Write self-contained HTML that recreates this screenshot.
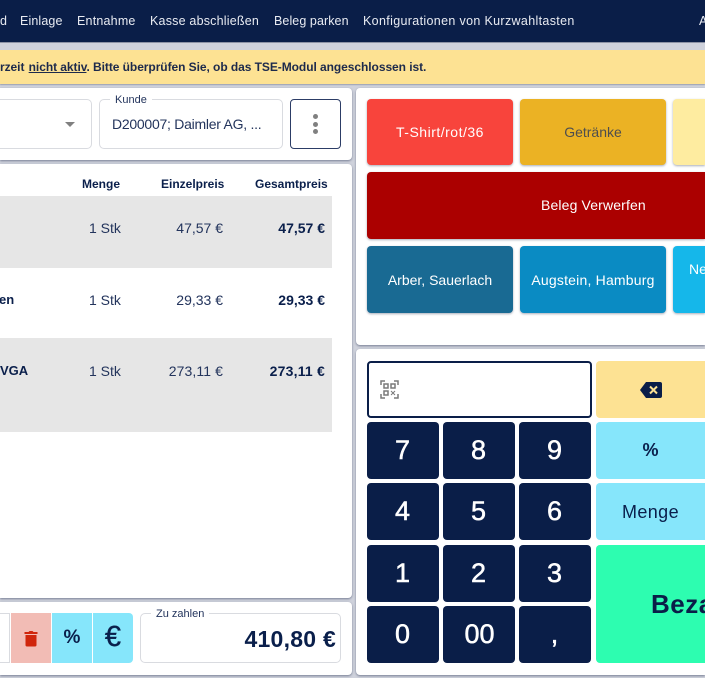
<!DOCTYPE html>
<html><head><meta charset="utf-8">
<style>
html,body{margin:0;padding:0;width:705px;height:678px;overflow:hidden;background:#cfd2dc;font-family:"Liberation Sans",sans-serif;color:#0a1f4b}
#root{position:absolute;left:0;top:0;width:705px;height:678px;overflow:hidden}
.a{position:absolute;white-space:nowrap}
.c{display:flex;align-items:center;justify-content:center;box-sizing:border-box}
.panel{position:absolute;background:#fff;box-shadow:0 1px 2px rgba(60,70,100,.6)}
.btn{position:absolute;border-radius:4px;display:flex;align-items:center;justify-content:center;font-size:14px;white-space:nowrap;box-shadow:0 1px 2px rgba(60,70,100,.45);color:#fff;overflow:hidden}
.key{position:absolute;width:72px;height:57px;background:#0a1e48;color:#fff;border-radius:4px;display:flex;align-items:center;justify-content:center;font-size:27px;-webkit-text-stroke:.5px #fff;padding-right:1px;box-sizing:border-box}
.nav{top:13px;color:#e8ebf2;font-size:12.5px;line-height:16px;letter-spacing:.25px}
.th{top:177px;font-size:12px;line-height:15px;font-weight:bold;text-align:right}
.td{font-size:14px;line-height:16px;color:#23345c}
.tb{font-size:14px;line-height:16px;font-weight:bold;color:#0a1f4b}
.fs{position:absolute;box-sizing:border-box;border:1px solid #d9dbe0;border-radius:5px;background:#fff}
.lg{position:absolute;background:#fff;padding:0 5px;font-size:11px;line-height:12px;color:#23345c;white-space:nowrap}
</style></head><body>
<div id="root">

<div class="a" style="left:0;top:0;width:705px;height:42px;background:#0a1e48"></div>
<div class="a" style="left:0;top:42px;width:705px;height:1px;background:#8d93a5"></div>
<div class="a nav" style="left:0">d</div>
<div class="a nav" style="left:20px;letter-spacing:.12px">Einlage</div>
<div class="a nav" style="left:77px;letter-spacing:.2px">Entnahme</div>
<div class="a nav" style="left:150px;letter-spacing:.2px">Kasse abschließen</div>
<div class="a nav" style="left:274px;letter-spacing:.08px">Beleg parken</div>
<div class="a nav" style="left:363px;letter-spacing:.34px">Konfigurationen von Kurzwahltasten</div>
<div class="a nav" style="left:699px;width:6px;overflow:hidden">A</div>

<div class="a" style="left:0;top:50px;width:705px;height:34px;background:#fde293;box-shadow:0 1px 1px rgba(60,70,100,.35)"></div>
<div class="a" style="left:0;top:60px;font-size:12px;line-height:15px;font-weight:bold;color:#1d2a4c;letter-spacing:-.06px">rzeit <span style="text-decoration:underline;margin-left:1px">nicht aktiv</span>. Bitte überprüfen Sie, ob das TSE-Modul angeschlossen ist.</div>

<!-- top left panel -->
<div class="panel" style="left:0;top:88px;width:352px;height:72px;border-radius:0 4px 4px 0"></div>
<div class="fs" style="left:0;top:99px;width:92px;height:50px;border-left:0;border-radius:0 5px 5px 0"></div>
<div class="a" style="left:65px;top:122px;width:0;height:0;border-left:5px solid transparent;border-right:5px solid transparent;border-top:5px solid #808080"></div>
<div class="fs" style="left:99px;top:99px;width:184px;height:50px"></div>
<div class="lg" style="left:110px;top:94px">Kunde</div>
<div class="a" style="left:112px;top:116px;font-size:14px;line-height:16px;color:#23345c;letter-spacing:-.26px">D200007; Daimler AG, ...</div>
<div class="a" style="left:290px;top:99px;width:51px;height:50px;box-sizing:border-box;border:1px solid #2c3d66;border-radius:4px"></div>
<div class="a" style="left:313px;top:114px;width:5px;height:5px;border-radius:50%;background:#808080"></div>
<div class="a" style="left:313px;top:122px;width:5px;height:5px;border-radius:50%;background:#808080"></div>
<div class="a" style="left:313px;top:129px;width:5px;height:5px;border-radius:50%;background:#808080"></div>

<!-- table -->
<div class="panel" style="left:0;top:164px;width:352px;height:434px;border-radius:0 4px 4px 0"></div>
<div class="a th" style="left:82px">Menge</div>
<div class="a th" style="left:161px">Einzelpreis</div>
<div class="a th" style="left:255px">Gesamtpreis</div>
<div class="a" style="left:0;top:196px;width:332px;height:72px;background:#e6e6e6"></div>
<div class="a" style="left:0;top:338px;width:332px;height:94px;background:#e6e6e6"></div>

<div class="a td" style="left:89px;top:220px">1 Stk</div>
<div class="a td" style="right:482px;top:220px">47,57 €</div>
<div class="a tb" style="right:380px;top:220px">47,57 €</div>

<div class="a tb" style="left:-1px;top:292px;font-size:13px">en</div>
<div class="a td" style="left:89px;top:292px">1 Stk</div>
<div class="a td" style="right:482px;top:292px">29,33 €</div>
<div class="a tb" style="right:380px;top:292px">29,33 €</div>

<div class="a tb" style="left:0;top:363px;font-size:13px">VGA</div>
<div class="a td" style="left:89px;top:363px">1 Stk</div>
<div class="a td" style="right:482px;top:363px;letter-spacing:.1px">273,11 €</div>
<div class="a tb" style="right:380px;top:363px;letter-spacing:.2px">273,11 €</div>

<!-- bottom left -->
<div class="panel" style="left:0;top:602px;width:352px;height:73px;border-radius:0 4px 4px 0"></div>
<div class="a" style="left:0;top:613px;width:10px;height:50px;box-sizing:border-box;border:1px solid #d9dbe0;border-left:0"></div>
<div class="a c" style="left:11px;top:613px;width:40px;height:50px;background:#f2bcb5">
<svg width="16" height="18" viewBox="0 0 16 18"><path d="M1.500 3h4l1-1h3l1 1h4v2h-13z M2.500 6h11v10a1.500 1.500 0 0 1-1.500 1.500H4A1.500 1.500 0 0 1 2.500 16z" fill="#d0260c"/></svg></div>
<div class="a c" style="left:52px;top:613px;width:40px;height:50px;background:#86e6fb;font-size:19px;font-weight:bold;padding-bottom:1px">%</div>
<div class="a c" style="left:93px;top:613px;width:40px;height:50px;background:#86e6fb;border-radius:0 4px 4px 0;font-size:29px;-webkit-text-stroke:.4px #0a1f4b;padding-bottom:2px">€</div>
<div class="fs" style="left:140px;top:613px;width:201px;height:50px"></div>
<div class="lg" style="left:151px;top:608px">Zu zahlen</div>
<div class="a" style="right:369px;top:625px;font-size:23px;line-height:28px;font-weight:bold;color:#0a1f4b;letter-spacing:.25px">410,80 €</div>

<!-- shortcut panel -->
<div class="panel" style="left:356px;top:88px;width:349px;height:257px;border-radius:4px 0 0 4px"></div>
<div class="btn" style="left:367px;top:99px;width:146px;height:66px;background:#f8443c;letter-spacing:.5px">T-Shirt/rot/36</div>
<div class="btn" style="left:520px;top:99px;width:146px;height:66px;background:#ebb224;color:#4e4e4e">Getränke</div>
<div class="btn" style="left:673px;top:99px;width:32px;height:66px;background:#feeca0;border-radius:4px 0 0 4px"></div>
<div class="btn" style="left:367px;top:172px;width:338px;height:67px;background:#ab0000;border-radius:4px 0 0 4px"></div>
<div class="a" style="left:541px;top:197px;font-size:14px;line-height:16px;color:#fff;letter-spacing:.14px">Beleg Verwerfen</div>
<div class="btn" style="left:367px;top:246px;width:146px;height:67px;background:#196a93">Arber, Sauerlach</div>
<div class="btn" style="left:520px;top:246px;width:146px;height:67px;background:#0a8bc3;letter-spacing:.2px">Augstein, Hamburg</div>
<div class="btn" style="left:673px;top:246px;width:32px;height:67px;background:#15b7ea;border-radius:4px 0 0 4px"></div>
<div class="a" style="left:689px;top:261px;font-size:14px;line-height:16px;color:#fff">Ne</div>

<!-- keypad panel -->
<div class="panel" style="left:356px;top:349px;width:349px;height:326px;border-radius:4px 0 0 4px"></div>
<div class="a" style="left:367px;top:361px;width:225px;height:57px;box-sizing:border-box;border:2px solid #0a1e48;border-radius:4px;background:#fff"></div>
<svg class="a" style="left:380px;top:380px" width="19" height="19" viewBox="0 0 19 19" fill="none" stroke="#7a7a7a" stroke-width="1.500">
<path d="M1 5V1h4M14 1h4v4M1 14v4h4M18 14v4h-4"/>
<rect x="4" y="4" width="4" height="4"/><rect x="11" y="4" width="4" height="4"/><rect x="4" y="11" width="4" height="4"/>
<path d="M11 11l4 4M15 11l-4 4" stroke-width="1"/></svg>

<div class="key" style="left:367px;top:422px">7</div>
<div class="key" style="left:443px;top:422px">8</div>
<div class="key" style="left:519px;top:422px">9</div>
<div class="key" style="left:367px;top:483px">4</div>
<div class="key" style="left:443px;top:483px">5</div>
<div class="key" style="left:519px;top:483px">6</div>
<div class="key" style="left:367px;top:545px">1</div>
<div class="key" style="left:443px;top:545px">2</div>
<div class="key" style="left:519px;top:545px">3</div>
<div class="key" style="left:367px;top:606px">0</div>
<div class="key" style="left:443px;top:606px;padding-left:1px;padding-right:0">00</div>
<div class="key" style="left:519px;top:606px">,</div>

<div class="a c" style="left:596px;top:361px;width:109px;height:57px;background:#fde293;border-radius:4px 0 0 4px">
<svg width="22" height="16" viewBox="0 0 22 16"><path d="M6 0H20a2 2 0 0 1 2 2V14a2 2 0 0 1-2 2H6L0 8z" fill="#0a1e48"/><path d="M10 4.500l7 7M17 4.500l-7 7" stroke="#fde293" stroke-width="2"/></svg></div>
<div class="a c" style="left:596px;top:422px;width:109px;height:57px;background:#86e6fb;border-radius:4px 0 0 4px;font-size:18px;font-weight:bold">%</div>
<div class="a c" style="left:596px;top:483px;width:109px;height:57px;background:#86e6fb;border-radius:4px 0 0 4px;font-size:18px;letter-spacing:.4px;padding-top:2px">Menge</div>
<div class="a" style="left:596px;top:545px;width:109px;height:118px;background:#2dfdb0;border-radius:4px 0 0 4px;overflow:hidden">
<div class="a" style="left:55px;top:44px;font-size:26px;line-height:30px;font-weight:bold;color:#0a1e48;letter-spacing:.5px">Bezahlen</div>
</div>

</div>
</body></html>
